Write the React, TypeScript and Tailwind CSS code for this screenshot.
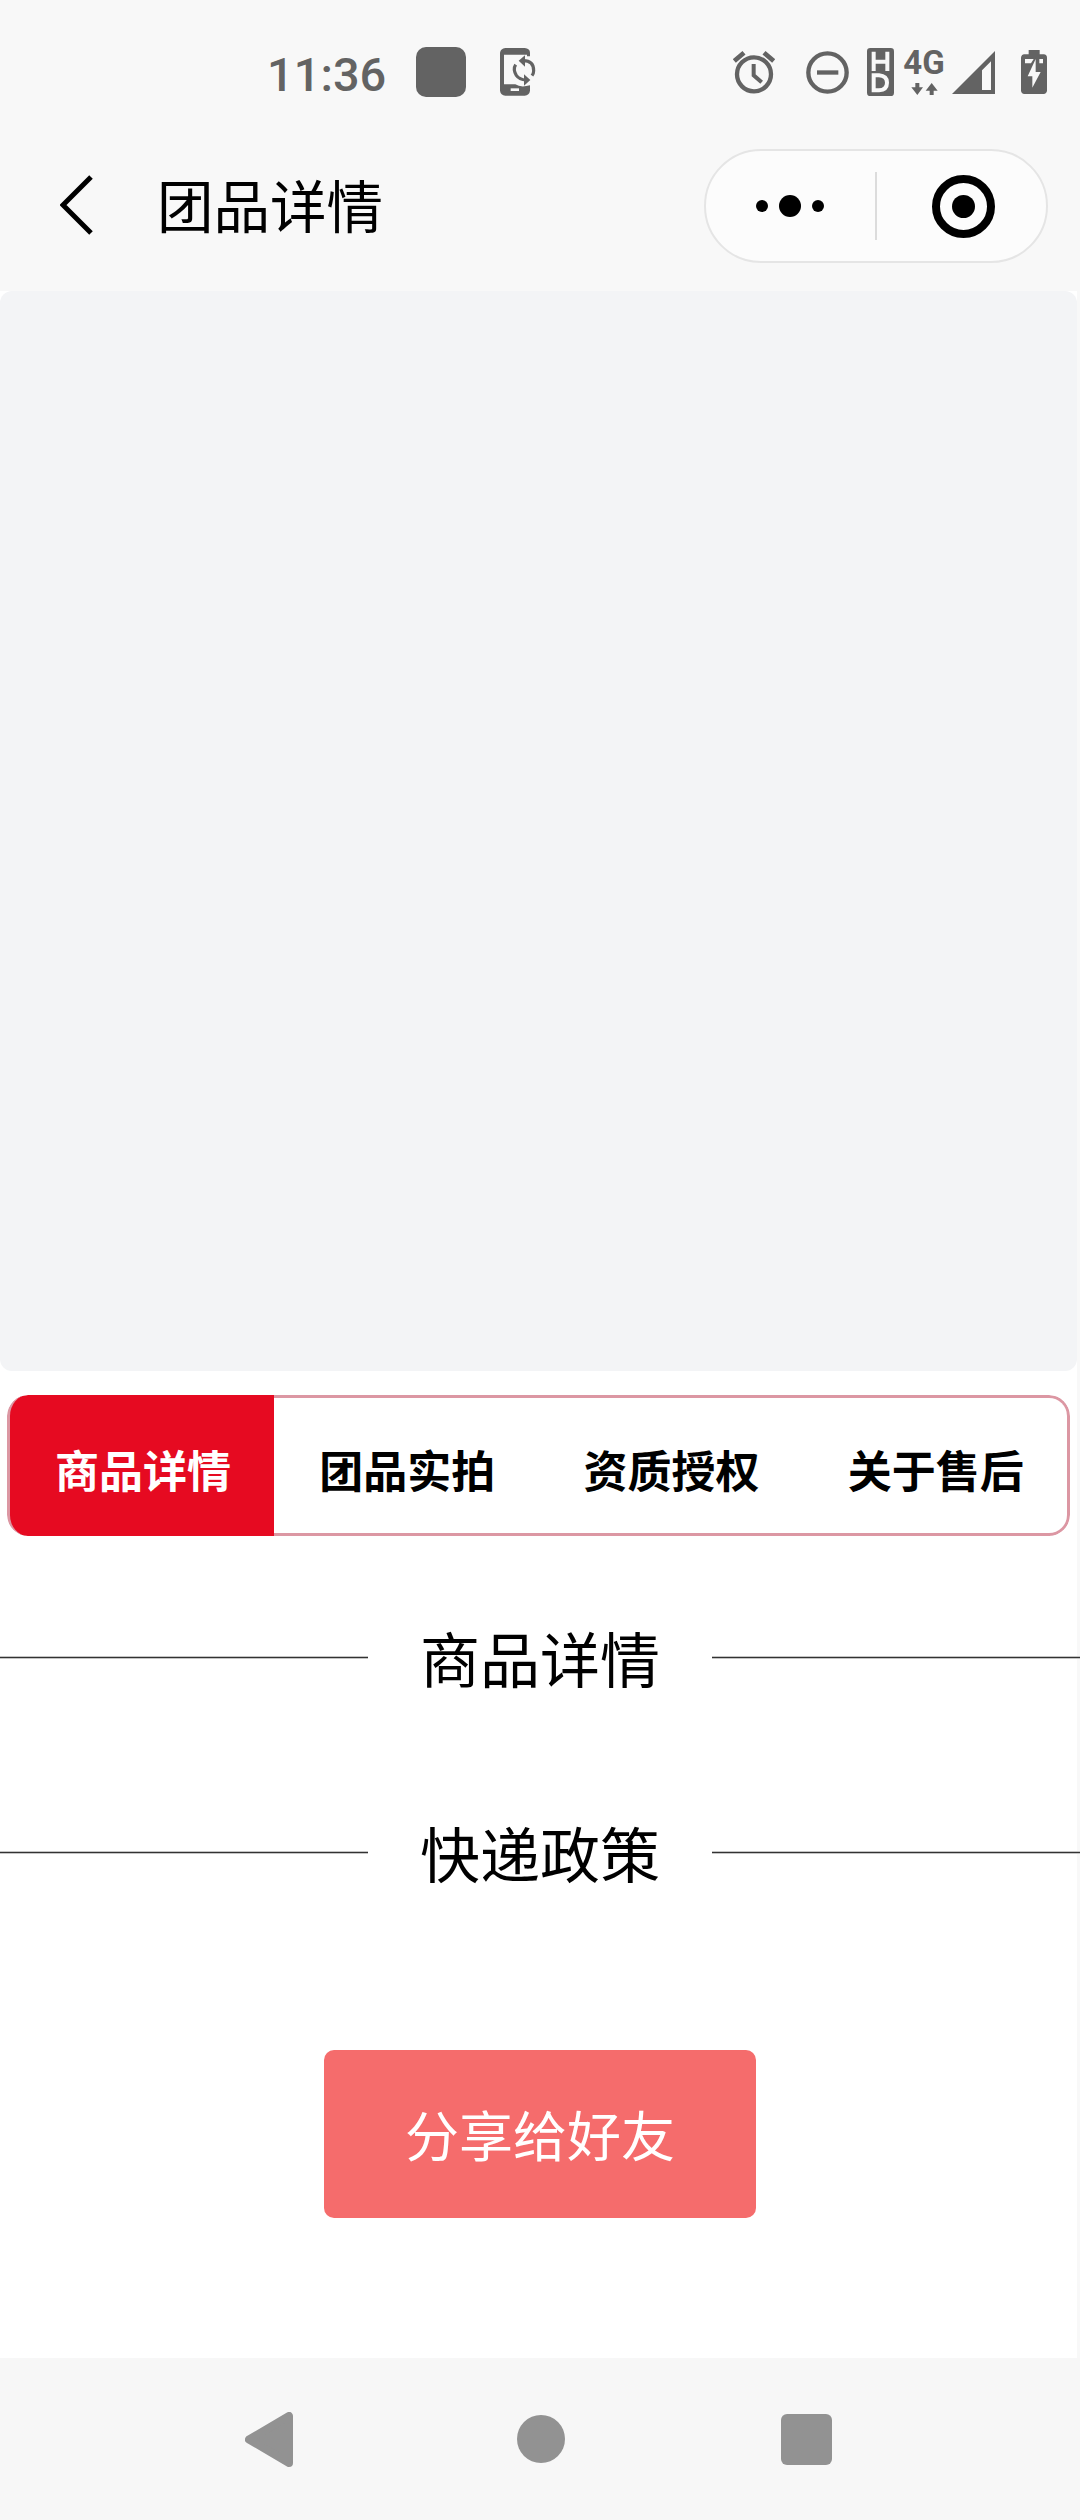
const cjk = "font-['Noto_Sans_CJK_SC',sans-serif]";

function StatusBar() {
  return (
    <header className="flex h-[144px] items-center text-[#636363]">
      <span className="ml-[267px] w-[149px] whitespace-nowrap font-['Roboto_Medium',Roboto,sans-serif] text-[47px] font-medium leading-[56px] mt-[5px]">11:36</span>
      <span className="size-[50px] rounded-[10px] bg-[#636363]" />
      <svg className="ml-[34px] h-[48px] w-[36px]" viewBox="0 0 108 144" fill="currentColor">
        <path d="M16 0H74Q90 2 90 14V25H81V20H12V109H46Q62 120 90 112V128Q88 142 74 143H16Q2 142 0 128V14Q2 2 16 0Z" />
        <rect x="32" y="121" width="25" height="8" fill="#f8f8f8" />
        <g fill="none" stroke="currentColor" strokeWidth="9.5">
          <path d="M70 38Q101 38 101 68Q101 76 96 83" />
          <path d="M47 50Q38 64 49 82Q58 95 78 96" />
        </g>
        <path d="M75 22V56L56 38ZM72 79V113L91 96Z" />
      </svg>
      <svg className="ml-[197px] h-[44px] w-[42px]" viewBox="0 0 126 132" fill="none" stroke="currentColor">
        <circle cx="63" cy="73" r="51" strokeWidth="13" />
        <path d="M62 42V76L86 97" strokeWidth="12" />
        <path d="M4 33L33 8M93 8L122 33" strokeWidth="14" />
      </svg>
      <svg className="ml-[31px] size-[43px]" viewBox="0 0 129 129" fill="none" stroke="currentColor">
        <circle cx="64.500" cy="64.500" r="57.500" strokeWidth="13" />
        <path d="M33 64.500H97" strokeWidth="13" />
      </svg>
      <svg className="ml-[18px] h-[48px] w-[27px]" viewBox="0 0 81 144">
        <rect width="81" height="144" rx="10" fill="#636363" />
        <g fill="none" stroke="#f8f8f8" strokeWidth="12">
          <path d="M20 11V69M61 11V69M20 41H61" />
          <path d="M20 82V127H36Q60 125 60 104Q60 84 36 82Z" />
        </g>
      </svg>
      <span className="ml-[9px] flex h-[48px] w-[42px] flex-col items-center">
        <span className="h-[32px] font-[Roboto,sans-serif] text-[33px] font-bold leading-[30px]">4G</span>
        <svg className="mt-[3px] h-[12px] w-[27px] shrink-0" viewBox="0 0 81 36" fill="currentColor">
          <path d="M13 0H25V13H36L19 36L1 13H13Z" />
          <path d="M56 36H68V23H80L62 0L44 23H56Z" />
        </svg>
      </span>
      <svg className="ml-[7px] h-[43px] w-[43px]" viewBox="0 0 129 129" fill="currentColor">
        <path fillRule="evenodd" d="M129 0V129H0ZM117 31L90 58V117H117Z" />
      </svg>
      <svg className="ml-[26px] h-[44px] w-[26px]" viewBox="0 0 78 132">
        <path d="M23 0H56V13H68Q78 14 78 23V122Q77 131 68 132H10Q1 131 0 122V23Q1 14 10 13H23Z" fill="#636363" />
        <path d="M12 27H38L30 40H12ZM55 27H66V40H55ZM44 27V66H59L34 113V79H20Z" fill="#f8f8f8" />
      </svg>
    </header>
  );
}

function TitleBar() {
  return (
    <div className="flex h-[147px] items-start">
      <svg className="ml-[60px] mt-[31px] h-[60px] w-[33px]" viewBox="0 0 33 60" fill="none" stroke="#000" strokeWidth="5">
        <path d="M31 2L3 30L31 58" />
      </svg>
      <h1 className="ml-[64px] mt-[19px] whitespace-nowrap text-[56.500px] leading-[80px]">团品详情</h1>
      <div className="ml-auto mr-[32px] mt-[5px] flex h-[114px] w-[344px] items-center rounded-full border-2 border-[#e5e5e5] bg-[#fcfcfc]">
        <div className="flex w-[169px] items-center justify-center gap-[11px] pr-[2px]">
          <span className="size-[12px] rounded-full bg-black" />
          <span className="size-[22px] rounded-full bg-black" />
          <span className="size-[12px] rounded-full bg-black" />
        </div>
        <span className="h-[68px] w-[2px] bg-[#dcdcdc]" />
        <div className="flex flex-1 items-center justify-center pl-[4px]">
          <span className="flex size-[63px] items-center justify-center rounded-full border-8 border-black">
            <span className="size-[23px] rounded-full bg-black" />
          </span>
        </div>
      </div>
    </div>
  );
}

function Tabs() {
  return (
    <nav className="ml-[7px] mt-[24px] flex h-[141px] w-[1063px] overflow-hidden rounded-[21px] text-center text-[44px] font-bold leading-[64px]">
      <span className="w-[267px] rounded-l-[21px] border-l-[3px] border-[#dc97a3] bg-[#e60a21] pl-[2px] pt-[42px] text-white">商品详情</span>
      <div className="grid flex-1 grid-cols-3 rounded-r-[21px] border-y-[3px] border-r-[3px] border-[#dc97a3] pt-[39px]">
        {["团品实拍", "资质授权", "关于售后"].map((label) => (
          <span key={label} className="pl-[2px]">{label}</span>
        ))}
      </div>
    </nav>
  );
}

function SectionTitle({ children }: { children: string }) {
  return (
    <div className="flex h-[87px] items-center">
      <span className="h-[3px] w-[368px] border-y border-[#c4c4c4] bg-[#333]" />
      <h2 className="flex-1 pb-[2px] text-center text-[60px] leading-[80px]">{children}</h2>
      <span className="h-[3px] w-[368px] border-y border-[#c4c4c4] bg-[#333]" />
    </div>
  );
}

export default function App() {
  return (
    <div className={`flex h-[2520px] w-[1080px] flex-col overflow-hidden bg-[#f8f8f8] text-black ${cjk}`}>
      <StatusBar />
      <TitleBar />
      <main className="h-[2067px] w-[1077px] bg-white">
        <div className="h-[1080px] w-[1077px] rounded-[12px] bg-[#f3f4f6]" />
        <Tabs />
        <div className="mt-[78px] flex w-[1080px] flex-col gap-[108px]">
          <SectionTitle>商品详情</SectionTitle>
          <SectionTitle>快递政策</SectionTitle>
        </div>
        <button className="ml-[324px] mt-[154px] flex h-[168px] w-[432px] items-center justify-center rounded-[10px] bg-[#f56c6c] text-[54px] leading-[80px] text-white">
          分享给好友
        </button>
      </main>
      <footer className="flex h-[162px] items-center bg-[#f7f7f7]">
        <svg className="ml-[245px] h-[55px] w-[48px]" viewBox="0 0 48 55" fill="#929292" stroke="#929292" strokeWidth="8" strokeLinejoin="round">
          <path d="M44 4V51L4 27.500Z" />
        </svg>
        <span className="ml-[223.500px] size-[48px] rounded-full bg-[#929292]" />
        <span className="ml-[216.500px] size-[51px] rounded-[6px] bg-[#929292]" />
      </footer>
    </div>
  );
}
